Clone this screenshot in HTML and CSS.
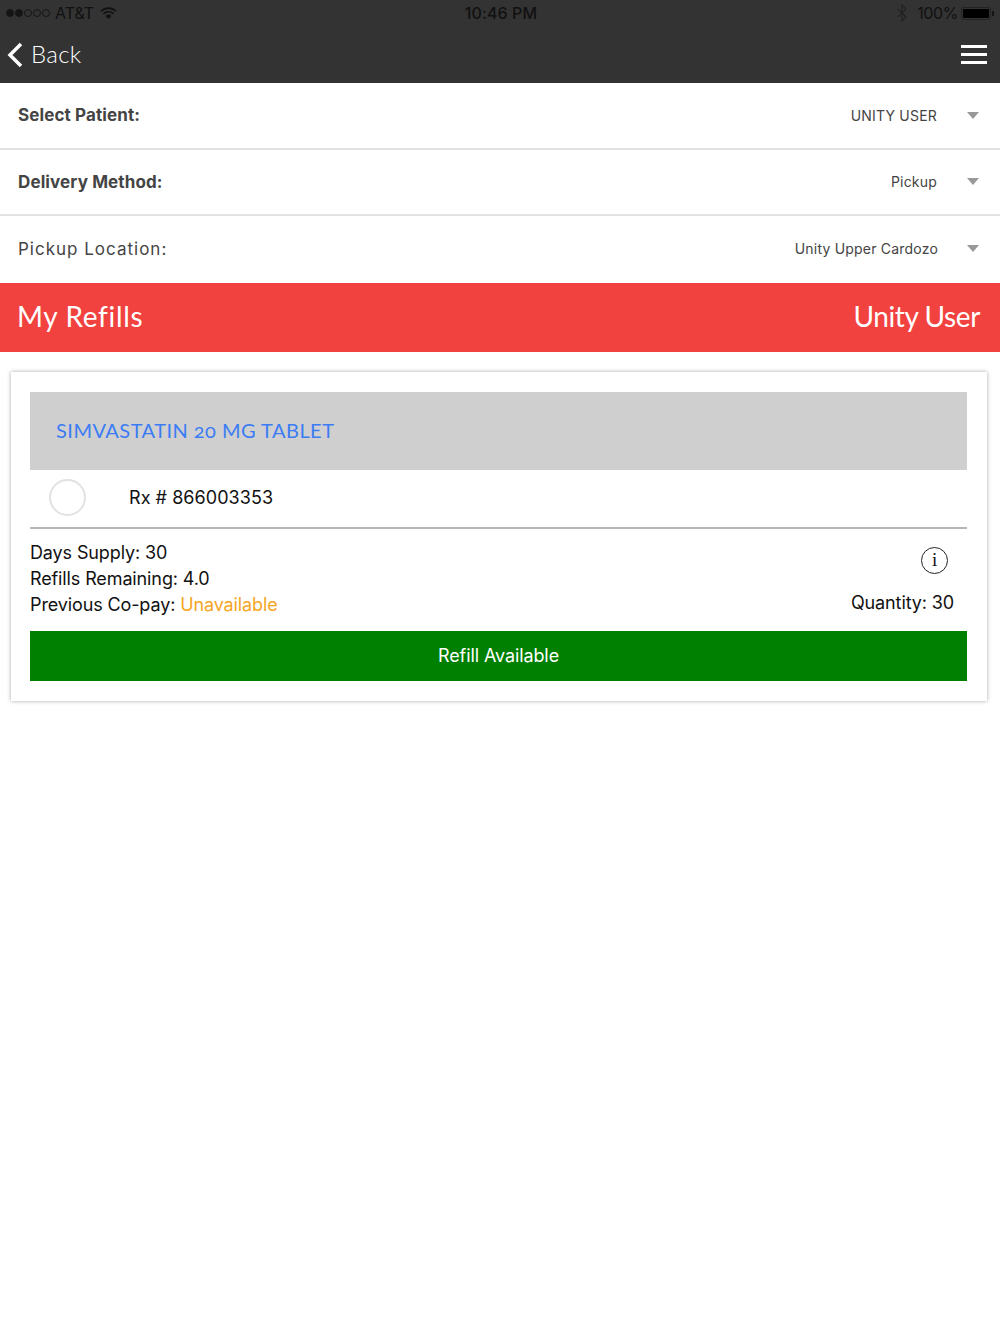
FILE: index.html
```html
<!DOCTYPE html>
<html lang="en">
<head>
  <meta charset="UTF-8">
  <meta name="viewport" content="width=device-width, initial-scale=1.0">
  <title>My Refills</title>
  <link rel="stylesheet" href="styles.css">
</head>
<body>
  <header class="top-bar">
    <div class="status-bar">
      <div class="status-left">
        <span class="signal">
          <i class="dot on"></i><i class="dot on"></i><i class="dot"></i><i class="dot"></i><i class="dot"></i>
        </span>
        <span>AT&amp;T</span>
        <svg class="wifi" width="17" height="13" viewBox="0 0 17 13">
          <path d="M1 4.2a10.6 10.6 0 0 1 15 0" fill="none" stroke="#111" stroke-width="1.6"/>
          <path d="M3.4 6.8a7.2 7.2 0 0 1 10.2 0" fill="none" stroke="#111" stroke-width="1.6"/>
          <path d="M5.6 9a4.1 4.1 0 0 1 5.8 0L8.5 12z" fill="#111"/>
        </svg>
      </div>
      <div class="status-time">10:46 PM</div>
      <div class="status-right">
        <svg class="bluetooth" width="10" height="18" viewBox="0 0 10 18">
          <path d="M1 5l8 8-4 4V1l4 4-8 8" fill="none" stroke="#222" stroke-width="1.2"/>
        </svg>
        <span>100%</span>
        <span class="battery"><i class="battery-fill"></i></span>
      </div>
    </div>
    <nav class="nav-bar">
      <a class="back-link">
        <svg width="16" height="26" viewBox="0 0 16 26">
          <path d="M14 2L3 13l11 11" fill="none" stroke="#fff" stroke-width="3.500"/>
        </svg>
        <span>Back</span>
      </a>
      <div class="menu-icon"><i></i><i></i><i></i></div>
    </nav>
  </header>

  <section class="filters">
    <div class="filter-row">
      <span class="filter-label bold">Select Patient:</span>
      <span class="filter-value">UNITY USER</span>
      <i class="caret"></i>
    </div>
    <div class="filter-row">
      <span class="filter-label bold">Delivery Method:</span>
      <span class="filter-value">Pickup</span>
      <i class="caret"></i>
    </div>
    <div class="filter-row">
      <span class="filter-label">Pickup Location:</span>
      <span class="filter-value wide">Unity Upper Cardozo</span>
      <i class="caret"></i>
    </div>
  </section>

  <section class="banner">
    <span class="banner-title">My Refills</span>
    <span class="banner-user">Unity User</span>
  </section>

  <main class="card">
    <h2 class="drug-name">SIMVASTATIN 20 MG TABLET</h2>
    <div class="rx-row">
      <span class="radio"></span>
      <span class="rx-number">Rx # 866003353</span>
    </div>
    <div class="details">
      <div class="details-left">
        <p>Days Supply: 30</p>
        <p>Refills Remaining: 4.0</p>
        <p>Previous Co-pay: <span class="unavailable">Unavailable</span></p>
      </div>
      <div class="details-right">
        <span class="info-icon">i</span>
        <p>Quantity: 30</p>
      </div>
    </div>
    <button class="refill-btn" type="button">Refill Available</button>
  </main>
</body>
</html>
```

FILE: styles.css
```css
* {
  box-sizing: border-box;
}
body {
  margin: 0;
  min-height: 1334px;
  background: #fff;
  color: #111;
  font-family: Inter, "Liberation Sans", sans-serif;
}
p {
  margin: 0;
}

/* top bar */
.top-bar {
  height: 83px;
  background: #333;
}
.status-bar {
  position: relative;
  display: flex;
  justify-content: space-between;
  align-items: center;
  height: 26px;
  padding: 0 6px;
  font-size: 16px;
  color: #111;
}
.status-left, .status-right {
  display: flex;
  align-items: center;
}
.status-time {
  position: absolute;
  left: 2px;
  right: 0;
  text-align: center;
  font-weight: 500;
  letter-spacing: 0.1px;
}
.signal {
  display: flex;
  gap: 1px;
  margin-right: 5px;
}
.dot {
  width: 8px;
  height: 8px;
  border: 1px solid #151515;
  border-radius: 50%;
}
.dot.on {
  background: #151515;
}
.wifi {
  margin-left: 6px;
}
.bluetooth {
  margin-right: 10px;
}
.status-right span:first-of-type {
  letter-spacing: -0.4px;
}
.battery {
  position: relative;
  width: 30px;
  height: 13px;
  margin-left: 3px;
  margin-right: 3px;
  padding: 1px;
  border: 1px solid #222;
  border-radius: 3px;
}
.battery::after {
  content: "";
  position: absolute;
  right: -4px;
  top: 3px;
  width: 2px;
  height: 5px;
  background: #151515;
}
.battery-fill {
  display: block;
  height: 100%;
  background: #000;
  border-radius: 1px;
}
.nav-bar {
  display: flex;
  justify-content: space-between;
  align-items: center;
  height: 57px;
  padding: 0 13px 0 7px;
}
.back-link {
  display: flex;
  align-items: center;
  gap: 8px;
  font-family: Lato, sans-serif;
  font-size: 24px;
  font-weight: 300;
  letter-spacing: 0.3px;
  line-height: 24px;
  color: #fff;
}
.back-link span {
  margin-top: -2px;
}
.menu-icon {
  display: flex;
  flex-direction: column;
  gap: 5px;
  width: 26px;
}
.menu-icon i {
  height: 3px;
  background: #fff;
}

/* dropdown rows */
.filter-row {
  display: flex;
  align-items: center;
  height: 66.500px;
  padding: 0 21px 0 18px;
  border-bottom: 2px solid #e2e2e2;
  font-size: 14px;
  color: #444;
}
.filter-row:last-child {
  border-bottom: none;
  padding-bottom: 1px;
}
.filter-label {
  margin-right: auto;
  font-size: 17px;
  letter-spacing: 1px;
}
.filter-label.bold {
  font-weight: 700;
  letter-spacing: 0.12px;
}
.filter-value {
  letter-spacing: 0.2px;
}
.caret {
  width: 0;
  height: 0;
  margin-left: 30px;
  border-left: 6px solid transparent;
  border-right: 6px solid transparent;
  border-top: 7px solid #999;
}
.filter-value.wide + .caret {
  margin-left: 29px;
}

/* red band */
.banner {
  display: flex;
  justify-content: space-between;
  align-items: center;
  height: 69px;
  padding: 0 20px 2px 17px;
  background: #f1423f;
  color: #fff;
  font-family: Lato, sans-serif;
  font-size: 28px;
  font-weight: 400;
}
.banner-title {
  letter-spacing: 0.65px;
}
.banner-user {
  letter-spacing: -0.4px;
}

/* prescription card */
.card {
  width: 976px;
  height: 329px;
  margin: 20px 0 0 11px;
  padding: 20px 20px 0 19px;
  background: #fff;
  box-shadow: 0 0 4px rgba(0, 0, 0, 0.35);
}
.drug-name {
  display: flex;
  align-items: center;
  height: 78px;
  margin: 0;
  padding: 0 0 2px 26px;
  background: #cfcfcf;
  color: #3b7cf5;
  font-family: Lato, sans-serif;
  font-size: 20px;
  font-weight: 400;
  font-variant-numeric: oldstyle-nums;
  letter-spacing: 0.47px;
}
.rx-row {
  display: flex;
  align-items: center;
  height: 59px;
  padding: 0 0 1px 19px;
  border-bottom: 2px solid #b5b5b5;
  font-size: 18px;
}
.radio {
  width: 37px;
  height: 37px;
  border: 2px solid #e2e2e2;
  border-radius: 50%;
}
.rx-number {
  margin-left: 43px;
  letter-spacing: 0.05px;
}
.details {
  display: flex;
  justify-content: space-between;
  height: 102px;
  padding-top: 11px;
  font-size: 18px;
  line-height: 26px;
  letter-spacing: -0.12px;
}
.details-right {
  display: flex;
  flex-direction: column;
  align-items: flex-end;
  padding: 7px 13px 0 0;
}
.info-icon {
  display: block;
  width: 27px;
  height: 27px;
  margin: 0 6px 16px 0;
  border: 1.500px solid #222;
  border-radius: 50%;
  font-family: "Liberation Serif", serif;
  font-size: 19px;
  line-height: 24px;
  text-align: center;
}
.unavailable {
  color: #f5a623;
}
.refill-btn {
  display: block;
  width: 100%;
  height: 50px;
  border: none;
  padding: 0 0 1px;
  background: #008000;
  color: #fff;
  font-family: inherit;
  font-size: 18px;
  letter-spacing: -0.1px;
}
```
